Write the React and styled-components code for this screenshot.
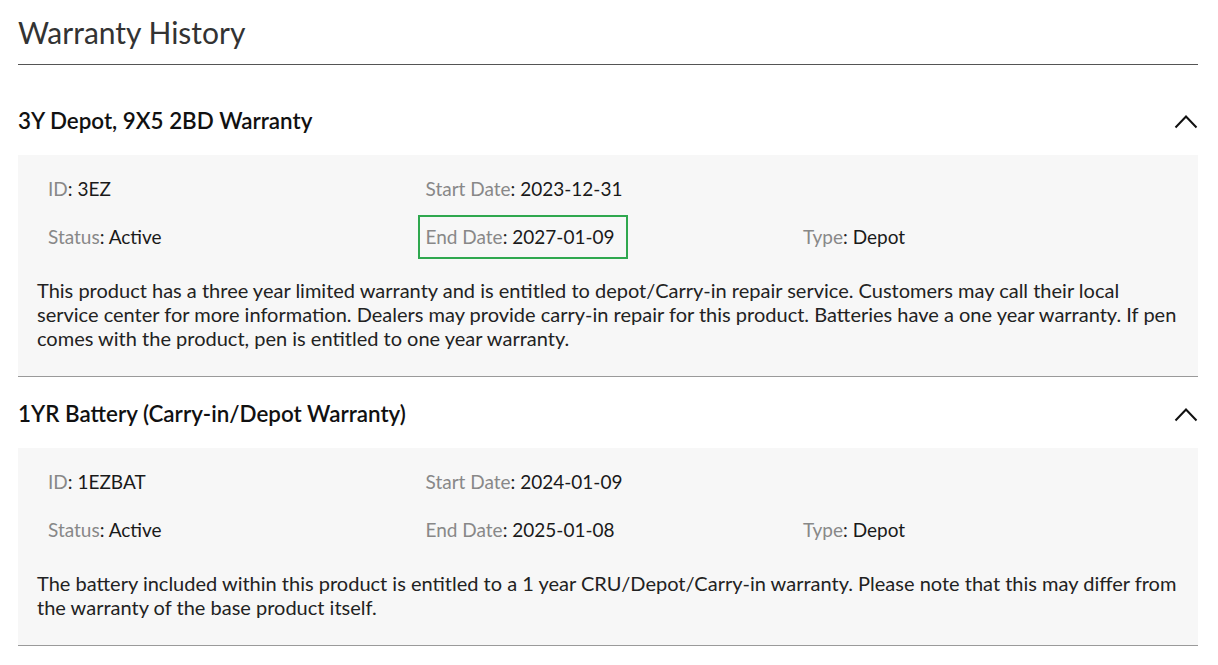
import styled, { createGlobalStyle } from "styled-components";

const GlobalStyle = createGlobalStyle`
  body {
    margin: 0;
    background: #fff;
    font-family: Lato, "Noto Sans", sans-serif;
    color: #222;
  }
`;

const warranties = [
    {
        name: "3Y Depot, 9X5 2BD Warranty",
        id: "3EZ",
        start: "2023-12-31",
        status: "Active",
        end: "2027-01-09",
        type: "Depot",
        highlightEnd: true,
        text: "This product has a three year limited warranty and is entitled to depot/Carry-in repair service. Customers may call their local service center for more information. Dealers may provide carry-in repair for this product. Batteries have a one year warranty. If pen comes with the product, pen is entitled to one year warranty.",
    },
    {
        name: "1YR Battery (Carry-in/Depot Warranty)",
        id: "1EZBAT",
        start: "2024-01-09",
        status: "Active",
        end: "2025-01-08",
        type: "Depot",
        highlightEnd: false,
        text: "The battery included within this product is entitled to a 1 year CRU/Depot/Carry-in warranty. Please note that this may differ from the warranty of the base product itself.",
    },
];

function Chevron() {
    return (
        <svg width="24" height="15" viewBox="0 0 24 15">
            <polyline points="1.5,13.5 12,2.5 22.5,13.5" fill="none" stroke="#111" strokeWidth="2"/>
        </svg>
    );
}

function Field({label, value, highlight}) {
    return (
        <FieldBox highlight={highlight}>
            <Label>{label}</Label>: <Value>{value}</Value>
        </FieldBox>
    );
}

function App() {
    return (
        <Page>
            <GlobalStyle/>
            <Title>Warranty History</Title>
            {warranties.map((w, i) => (
                <Section key={w.id} first={i === 0}>
                    <Header>
                        <HeaderText>{w.name}</HeaderText>
                        <Chevron/>
                    </Header>
                    <Panel>
                        <Grid>
                            <Field label="ID" value={w.id}/>
                            <Field label="Start Date" value={w.start}/>
                            <span/>
                            <Field label="Status" value={w.status}/>
                            <Field label="End Date" value={w.end} highlight={w.highlightEnd}/>
                            <Field label="Type" value={w.type}/>
                        </Grid>
                        <Description>{w.text}</Description>
                    </Panel>
                </Section>
            ))}
        </Page>
    );
}

export default App;

const Page = styled.div`
  width: 1180px;
  margin-left: 18px;
`;

const Title = styled.h1`
  margin: 0;
  padding: 14px 0;
  font-size: 30px;
  line-height: 36px;
  font-weight: 400;
  color: #333;
  border-bottom: 1px solid #555;
`;

const Section = styled.section`
  margin-top: ${p => p.first ? "19px" : "0"};
`;

const Header = styled.div`
  display: flex;
  align-items: center;
  justify-content: space-between;
  padding: 21px 0 18px;
  height: 32px;
`;

const HeaderText = styled.h2`
  margin: 0;
  font-size: 22.4px;
  line-height: 32px;
  font-weight: 600;
  color: #111;
`;

const Panel = styled.div`
  background: #f7f7f7;
  padding: 12px 16px 26px 19px;
  border-bottom: 1px solid #9a9a9a;
`;

const Grid = styled.div`
  display: grid;
  grid-template-columns: repeat(3, 377.5px);
  row-gap: 4px;
  padding-left: 3px;
`;

const FieldBox = styled.div`
  justify-self: start;
  border: 2px solid ${p => p.highlight ? "#2fa84f" : "transparent"};
  padding: 8px 11px 8px 6px;
  font-size: 19px;
  line-height: 24px;
  white-space: nowrap;
`;

const Label = styled.span`
  color: #888;
`;

const Value = styled.span`
  color: #1a1a1a;
`;

const Description = styled.p`
  margin: 19px 0 0;
  font-size: 20px;
  line-height: 24px;
  color: #222;
`;
